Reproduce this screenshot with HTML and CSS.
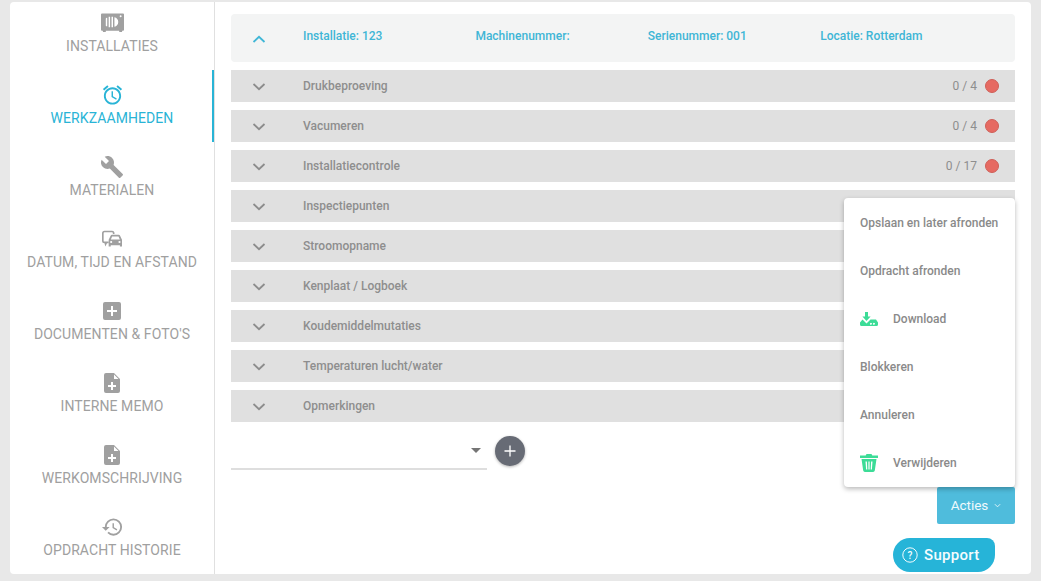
FILE: index.html
```html
<!DOCTYPE html>
<html lang="en">
<head>
    <meta charset="UTF-8">
    <title>Werkzaamheden</title>
    <link rel="stylesheet" href="styles.css">
</head>
<body>
    <div class="frame">
        <nav class="sidebar">
            <a class="nav-item">
                <svg class="nav-icon" viewBox="0 0 24 20" width="23" height="20"><path fill-rule="evenodd" d="M1 0h22a1 1 0 0 1 1 1v16a1 1 0 0 1-1 1h-1v1.500h-3V18H5v1.500H2V18H1a1 1 0 0 1-1-1V1a1 1 0 0 1 1-1zM6 4.500A1 1 0 0 0 5 5.500v7a1 1 0 0 0 1 1h.5v-9zM8 3.500v11h1.500v-11zM11 3.500v11h1.500v-11zM14 4v10c2.500-.5 4-2.500 4-5s-1.500-4.500-4-5zM20.500 2a1 1 0 1 0 0 2 1 1 0 0 0 0-2z"/></svg>
                <span>INSTALLATIES</span>
            </a>
            <a class="nav-item active">
                <svg class="nav-icon" viewBox="0 0 24 24" width="23" height="23"><path d="M22 5.720l-4.600-3.860-1.290 1.530 4.600 3.860L22 5.720zM7.880 3.390L6.600 1.860 2 5.710l1.290 1.530 4.590-3.850zM12.500 8H11v6l4.750 2.850.75-1.230-4-2.370V8zM12 4c-4.970 0-9 4.030-9 9s4.030 9 9 9 9-4.030 9-9-4.030-9-9-9zm0 16c-3.870 0-7-3.130-7-7s3.130-7 7-7 7 3.130 7 7-3.130 7-7 7z"/></svg>
                <span>WERKZAAMHEDEN</span>
            </a>
            <a class="nav-item">
                <svg class="nav-icon" viewBox="0 0 24 24" width="24" height="24"><path d="M22.700 19l-9.100-9.100c.9-2.300.4-5-1.500-6.900-2-2-5-2.400-7.400-1.300L9 6 6 9 1.600 4.700C.4 7.100.9 10.100 2.900 12.100c1.900 1.900 4.600 2.400 6.900 1.500l9.100 9.100c.4.400 1 .4 1.400 0l2.300-2.300c.5-.4.5-1.100.1-1.400z"/></svg>
                <span>MATERIALEN</span>
            </a>
            <a class="nav-item">
                <svg class="nav-icon" viewBox="0 0 24 20" width="20" height="17"><path d="M3 0h9a3 3 0 0 1 3 3v1h-2V3a1 1 0 0 0-1-1H3a1 1 0 0 0-1 1v9a1 1 0 0 0 1 1h5v2H6l-2 4-1-4a3 3 0 0 1-3-3V3a3 3 0 0 1 3-3z"/><path fill-rule="evenodd" d="M12 5h8c.8 0 1.400.5 1.700 1.200L24 11v8h-2.500v-1.500h-11V19H8v-8l2.300-4.800C10.600 5.500 11.200 5 12 5zm.2 2l-1.600 3.500h10.800L19.800 7zM11 12.300a1.300 1.300 0 1 0 0 2.600 1.300 1.300 0 0 0 0-2.600zm10 0a1.300 1.300 0 1 0 0 2.600 1.300 1.300 0 0 0 0-2.600z"/></svg>
                <span>DATUM, TIJD EN AFSTAND</span>
            </a>
            <a class="nav-item">
                <svg class="nav-icon" viewBox="0 0 18 18" width="18" height="18"><path fill-rule="evenodd" d="M2 0h14a2 2 0 0 1 2 2v14a2 2 0 0 1-2 2H2a2 2 0 0 1-2-2V2a2 2 0 0 1 2-2zm6 4v4H4v2h4v4h2v-4h4V8h-4V4z"/></svg>
                <span>DOCUMENTEN &amp; FOTO'S</span>
            </a>
            <a class="nav-item">
                <svg class="nav-icon" viewBox="0 0 16 20" width="16" height="20"><path fill-rule="evenodd" d="M2 0h8l6 6v12a2 2 0 0 1-2 2H2a2 2 0 0 1-2-2V2a2 2 0 0 1 2-2zm5 9v3H4v2h3v3h2v-3h3v-2H9V9zM10 1.500V6h4.500z"/></svg>
                <span>INTERNE MEMO</span>
            </a>
            <a class="nav-item">
                <svg class="nav-icon" viewBox="0 0 16 20" width="16" height="20"><path fill-rule="evenodd" d="M2 0h8l6 6v12a2 2 0 0 1-2 2H2a2 2 0 0 1-2-2V2a2 2 0 0 1 2-2zm5 9v3H4v2h3v3h2v-3h3v-2H9V9zM10 1.500V6h4.500z"/></svg>
                <span>WERKOMSCHRIJVING</span>
            </a>
            <a class="nav-item">
                <svg class="nav-icon" viewBox="0 0 24 24" width="23" height="23"><path d="M13 3a9 9 0 0 0-9 9H1l3.890 3.890.07.140L9 12H6c0-3.870 3.130-7 7-7s7 3.130 7 7-3.130 7-7 7c-1.930 0-3.680-.79-4.940-2.060l-1.420 1.420A8.954 8.954 0 0 0 13 21a9 9 0 0 0 0-18zm-1 5v5l4.280 2.540.72-1.210-3.500-2.080V8H12z"/></svg>
                <span>OPDRACHT HISTORIE</span>
            </a>
        </nav>

        <main class="content">
            <div class="order-header">
                <svg class="chevron" viewBox="0 0 14 8" width="14" height="8"><path d="M1.500 7L7 1.800 12.500 7" /></svg>
                <div class="order-fields">
                    <span>Installatie: 123</span>
                    <span>Machinenummer:</span>
                    <span>Serienummer: 001</span>
                    <span>Locatie: Rotterdam</span>
                </div>
            </div>

            <div class="row">
                <svg class="chevron" viewBox="0 0 14 8" width="14" height="8"><path d="M1.500 1L7 6.200 12.500 1" /></svg>
                <span class="row-title">Drukbeproeving</span>
                <span class="row-count">0 / 4</span>
                <span class="dot"></span>
            </div>
            <div class="row">
                <svg class="chevron" viewBox="0 0 14 8" width="14" height="8"><path d="M1.500 1L7 6.200 12.500 1" /></svg>
                <span class="row-title">Vacumeren</span>
                <span class="row-count">0 / 4</span>
                <span class="dot"></span>
            </div>
            <div class="row">
                <svg class="chevron" viewBox="0 0 14 8" width="14" height="8"><path d="M1.500 1L7 6.200 12.500 1" /></svg>
                <span class="row-title">Installatiecontrole</span>
                <span class="row-count">0 / 17</span>
                <span class="dot"></span>
            </div>
            <div class="row">
                <svg class="chevron" viewBox="0 0 14 8" width="14" height="8"><path d="M1.500 1L7 6.200 12.500 1" /></svg>
                <span class="row-title">Inspectiepunten</span>
            </div>
            <div class="row">
                <svg class="chevron" viewBox="0 0 14 8" width="14" height="8"><path d="M1.500 1L7 6.200 12.500 1" /></svg>
                <span class="row-title">Stroomopname</span>
            </div>
            <div class="row">
                <svg class="chevron" viewBox="0 0 14 8" width="14" height="8"><path d="M1.500 1L7 6.200 12.500 1" /></svg>
                <span class="row-title">Kenplaat / Logboek</span>
            </div>
            <div class="row">
                <svg class="chevron" viewBox="0 0 14 8" width="14" height="8"><path d="M1.500 1L7 6.200 12.500 1" /></svg>
                <span class="row-title">Koudemiddelmutaties</span>
            </div>
            <div class="row">
                <svg class="chevron" viewBox="0 0 14 8" width="14" height="8"><path d="M1.500 1L7 6.200 12.500 1" /></svg>
                <span class="row-title">Temperaturen lucht/water</span>
            </div>
            <div class="row">
                <svg class="chevron" viewBox="0 0 14 8" width="14" height="8"><path d="M1.500 1L7 6.200 12.500 1" /></svg>
                <span class="row-title">Opmerkingen</span>
            </div>

            <div class="add-form">
                <div class="select-box"><span class="select-arrow"></span></div>
                <button class="add-btn">
                    <svg viewBox="0 0 12 12" width="12" height="12"><path d="M6 0.500v11M0.500 6h11" /></svg>
                </button>
            </div>

            <div class="actions">
                <button class="actions-btn">Acties
                    <svg viewBox="0 0 8 5" width="7" height="5"><path d="M1 1l3 3 3-3" /></svg>
                </button>
            </div>
        </main>

        <div class="menu">
            <div class="menu-item">Opslaan en later afronden</div>
            <div class="menu-item">Opdracht afronden</div>
            <div class="menu-item">
                <svg class="menu-icon" viewBox="0 0 18 14" width="18" height="14"><path d="M5 0h3v4.500h2.600L6.500 9 2.400 4.500H5z"/><path fill-rule="evenodd" d="M2.500 7.500L6.500 11.500 10.500 7.500H16l2 3v2a1.500 1.500 0 0 1-1.500 1.500h-15A1.500 1.500 0 0 1 0 12.500v-2zM11.500 11a1 1 0 1 0 0 1.600 1 1 0 0 0 0-1.600zm3 0a1 1 0 1 0 0 1.600 1 1 0 0 0 0-1.600z"/></svg>
                Download
            </div>
            <div class="menu-item">Blokkeren</div>
            <div class="menu-item">Annuleren</div>
            <div class="menu-item">
                <svg class="menu-icon" viewBox="0 0 18 18" width="18" height="18"><path fill-rule="evenodd" d="M6.500 0h5l.8 1.500H18v2.500H0V1.500h5.700zM1.500 5h15l-1.700 11.500A1.800 1.800 0 0 1 13 18H5a1.800 1.800 0 0 1-1.800-1.500zM5.500 7.500l.6 8h1.200l-.4-8zM8.400 7.500v8h1.200v-8zM11.100 7.500l-.4 8h1.200l.6-8z"/></svg>
                Verwijderen
            </div>
        </div>

        <button class="support-btn">
            <svg viewBox="0 0 16 16" width="16" height="16"><circle class="support-ring" cx="8" cy="8" r="7.200"/><text x="8" y="11.600" text-anchor="middle" class="support-q">?</text></svg>
            Support
        </button>
    </div>
</body>
</html>
```

FILE: styles.css
```css
* {
    margin: 0;
    padding: 0;
    box-sizing: border-box;
}

body {
    width: 1041px;
    height: 581px;
    overflow: hidden;
    background: #e8e8e8;
    font-family: Roboto, 'Liberation Sans', sans-serif;
    color: #8e8e8e;
    padding: 2px 10px 7px;
}

.frame {
    position: relative;
    display: flex;
    width: 1021px;
    height: 572px;
    background: #fff;
    border-radius: 4px;
    overflow: hidden;
}

.sidebar {
    width: 205px;
    flex-shrink: 0;
    border-right: 1px solid #e0e0e0;
    margin-top: -4px;
    height: 576px;
}

.nav-item {
    position: relative;
    display: flex;
    flex-direction: column;
    align-items: center;
    height: 72px;
    padding-top: 12px;
    font-size: 14px;
    letter-spacing: 0.08px;
    line-height: 16px;
    color: #a0a0a0;
    width: 204px;
}

.nav-icon {
    height: 26px;
    margin-bottom: 2px;
    fill: #a0a0a0;
}

.nav-item.active {
    color: #29b4d6;
}

.nav-item.active .nav-icon {
    fill: #29b4d6;
}

.nav-item.active::after {
    content: "";
    position: absolute;
    right: 0;
    top: 0;
    width: 2px;
    height: 72px;
    background: #29b4d6;
}

.content {
    flex: 1;
    padding: 12px 16px 0;
}

.order-header {
    display: flex;
    align-items: center;
    height: 48px;
    margin-bottom: 8px;
    background: #f3f4f4;
    border-radius: 4px;
    font-size: 12px;
    font-weight: 500;
    color: #3fb6d6;
}

.order-header .chevron {
    stroke: #3fb6d6;
}

.order-fields {
    display: grid;
    grid-template-columns: repeat(4, 172.400px);
    margin-top: -5px;
}

.chevron {
    flex-shrink: 0;
    margin: 2px 37px 0 21px;
    fill: none;
    stroke: #8c8c8c;
    stroke-width: 1.800;
}

.row {
    display: flex;
    align-items: center;
    height: 32px;
    margin-bottom: 8px;
    background: #e0e0e0;
    font-size: 12px;
    font-weight: 500;
    padding-right: 16px;
}

.row .chevron {
    margin-top: 1px;
}

.row-title {
    flex: 1;
    margin-top: -1px;
}

.row-count {
    margin-right: 8px;
    font-weight: 400;
    margin-top: -1px;
}

.dot {
    width: 14px;
    height: 14px;
    border-radius: 50%;
    background: #e66a62;
    border: 1px solid #cf5f58;
}

.add-form {
    display: flex;
    align-items: center;
    gap: 8px;
    margin-top: -3px;
    height: 48px;
}

.select-box {
    position: relative;
    width: 256px;
    height: 38px;
    border-bottom: 2px solid #dedede;
}

.select-arrow {
    position: absolute;
    right: 6px;
    top: 16px;
    border-left: 5px solid transparent;
    border-right: 5px solid transparent;
    border-top: 5px solid #757575;
}

.add-btn {
    display: flex;
    align-items: center;
    justify-content: center;
    width: 30px;
    height: 30px;
    border: none;
    border-radius: 50%;
    background: #676b75;
    box-shadow: 0 1px 3px rgba(0,0,0,0.3);
}

.add-btn svg {
    stroke: #fff;
    stroke-width: 1.300;
}

.actions {
    display: flex;
    justify-content: flex-end;
    margin-top: 12px;
}

.actions-btn {
    display: flex;
    align-items: center;
    justify-content: center;
    gap: 6px;
    width: 78px;
    height: 37px;
    padding-bottom: 2px;
    border: none;
    border-radius: 2px;
    background: #4fbcdc;
    color: #eef9fc;
    font-family: inherit;
    font-size: 13.500px;
    font-weight: 400;
}

.actions-btn svg {
    fill: none;
    stroke: #eef9fc;
    stroke-width: 1;
    margin-top: 2px;
}

.menu {
    position: absolute;
    left: 834px;
    top: 196px;
    width: 171px;
    height: 289px;
    padding-top: 1px;
    background: #fff;
    border-radius: 4px;
    box-shadow: 0 2px 5px rgba(0,0,0,0.28);
    font-size: 12px;
    font-weight: 500;
    color: #8a8a8a;
}

.menu-item {
    display: flex;
    align-items: center;
    height: 48px;
    padding-left: 16px;
    white-space: nowrap;
}

.menu-icon {
    width: 18px;
    margin-right: 15px;
    fill: #3cdc97;
}

.support-btn {
    position: absolute;
    left: 883px;
    top: 536px;
    display: flex;
    align-items: center;
    gap: 6px;
    width: 102px;
    height: 34px;
    padding-left: 9px;
    border: none;
    border-radius: 17px 8px 17px 17px;
    background: #26b4d8;
    color: #f4fcfe;
    font-family: inherit;
    font-size: 15px;
    font-weight: 500;
    letter-spacing: 0.3px;
}

.support-ring {
    fill: none;
    stroke: #f4fcfe;
    stroke-width: 1;
}

.support-q {
    fill: #f4fcfe;
    font-size: 10px;
}
```
